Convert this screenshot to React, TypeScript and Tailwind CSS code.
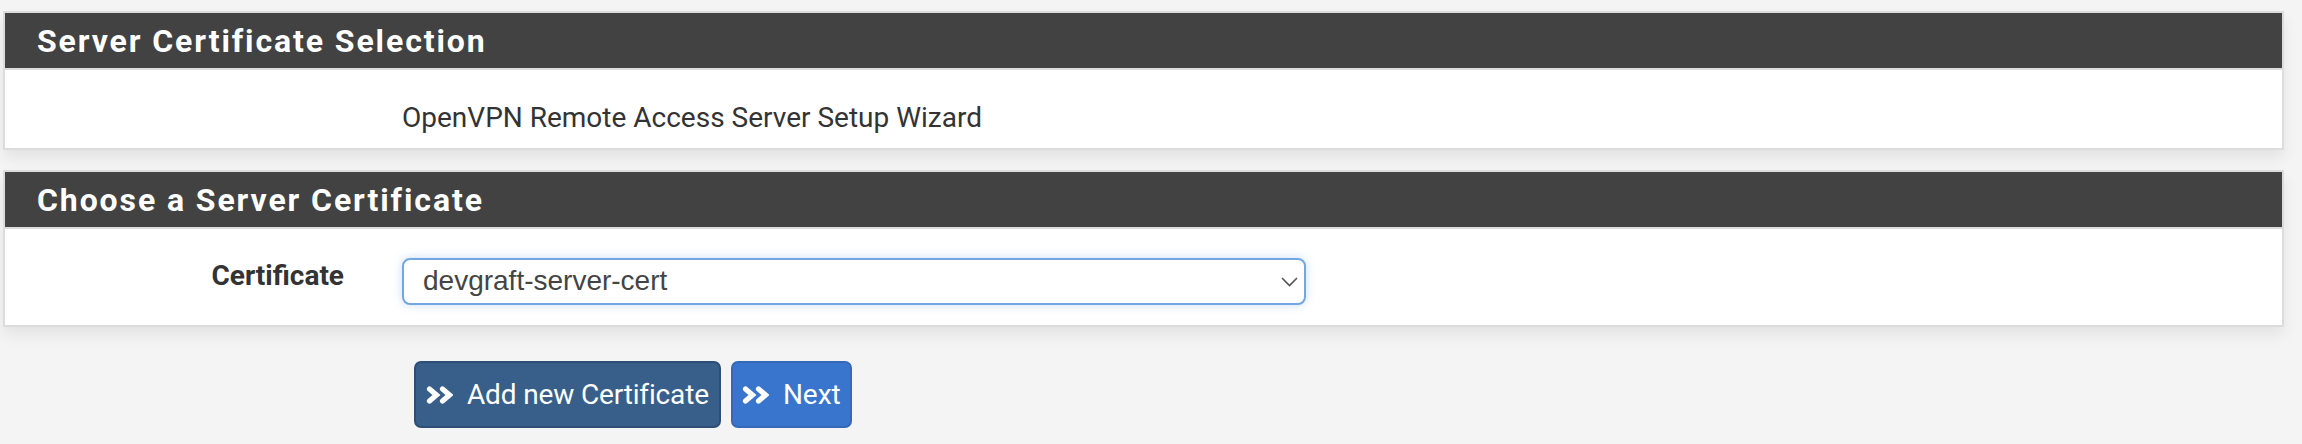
import React from 'react';

const roboto = { fontFamily: 'Roboto, "Liberation Sans", sans-serif' };

const DoubleAngle: React.FC = () => (
    <svg width="27" height="18" viewBox="0 0 27 18" fill="none" stroke="currentColor" strokeWidth="5.2" strokeLinecap="round" strokeLinejoin="miter">
        <polyline points="3.5,3 10.5,9 3.5,15" />
        <polyline points="16.5,3 23.5,9 16.5,15" />
    </svg>
);

const Panel: React.FC<{ title: string; children: React.ReactNode }> = ({ title, children }) => (
    <div className="border-2 border-[#dcdcdc] bg-white shadow-[0_8px_14px_rgba(0,0,0,0.07)]">
        <div className="h-[55px] bg-[#424242] border-b-2 border-[#dcdcdc] flex items-center pl-[32px] box-content">
            <h2 className="text-white text-[32px] font-bold tracking-[1.9px] leading-none" style={roboto}>{title}</h2>
        </div>
        {children}
    </div>
);

const App: React.FC = () => {
    return (
        <div className="w-[2302px] h-[444px] bg-[#f4f4f4] pl-[3px] pr-[18px] pt-[11px]" style={roboto}>
            <Panel title="Server Certificate Selection">
                <div className="h-[78px] pt-[28px] pl-[397px]">
                    <p className="text-[28px] leading-[40px] text-[#333]">OpenVPN Remote Access Server Setup Wizard</p>
                </div>
            </Panel>

            <div className="mt-[20px]">
                <Panel title="Choose a Server Certificate">
                    <div className="h-[96px] flex items-center">
                        <label className="w-[339px] text-right text-[28px] font-bold text-[#333] leading-none -mt-[3px]">Certificate</label>
                        <div className="ml-[58px] relative mt-[8px]">
                            <div className="w-[904px] h-[47px] rounded-[8px] border-2 border-[#74a6e0] shadow-[0_0_10px_rgba(102,160,235,0.35)] bg-white flex items-center pl-[19px]">
                                <span className="text-[28px] text-[#444] leading-none" style={{ fontFamily: '"Liberation Sans", Arial, sans-serif' }}>devgraft-server-cert</span>
                            </div>
                            <svg className="absolute right-[8px] top-[19px]" width="17" height="10" viewBox="0 0 17 10" fill="none" stroke="#555" strokeWidth="1.6">
                                <polyline points="1,1 8.5,8.5 16,1" />
                            </svg>
                        </div>
                    </div>
                </Panel>
            </div>

            <div className="flex gap-[10px] pl-[411px] mt-[34px]">
                <button className="h-[67px] flex items-center gap-[14px] pl-[10px] pr-[10px] rounded-[7px] bg-[#375f8a] border-2 border-[#2d4f75] text-white text-[28px] tracking-[-0.15px]">
                    <DoubleAngle />
                    <span>Add new Certificate</span>
                </button>
                <button className="h-[67px] flex items-center gap-[14px] pl-[9px] pr-[9px] rounded-[7px] bg-[#3975cc] border-2 border-[#3469b8] text-white text-[28px]">
                    <DoubleAngle />
                    <span>Next</span>
                </button>
            </div>
        </div>
    );
};

export default App;
